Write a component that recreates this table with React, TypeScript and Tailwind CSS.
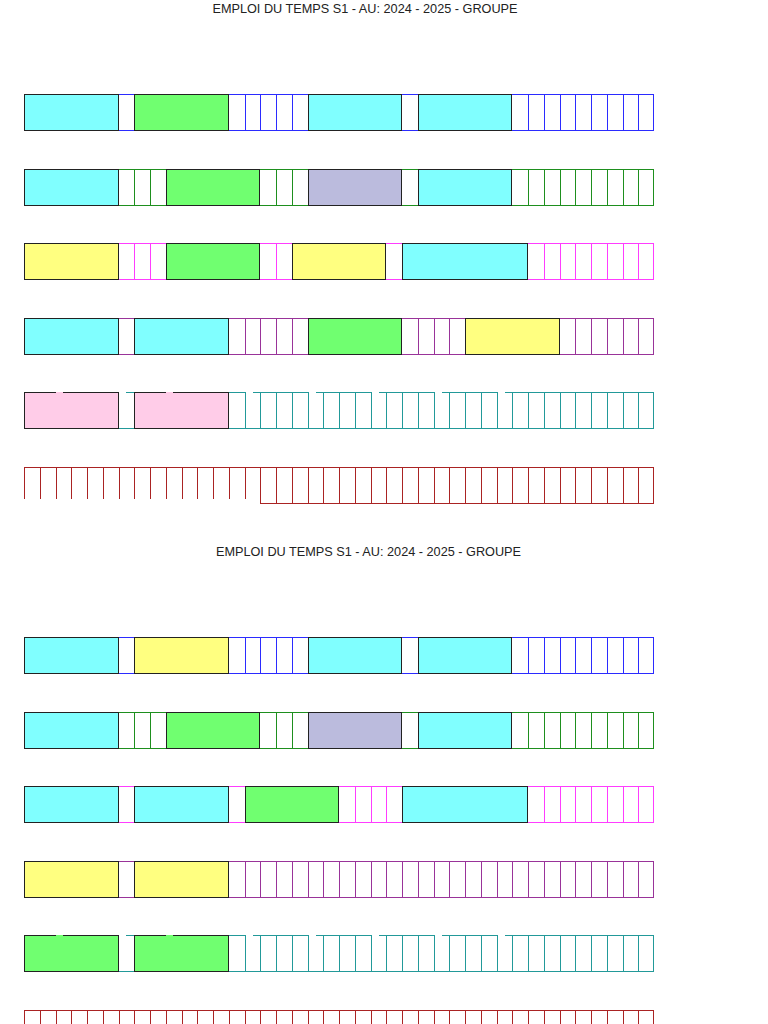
import React from "react";

type Kind = "e" | "s" | "b";
type Item = { kind: Kind; start: number; span: number; fill?: string };

const FILL: Record<string, string> = {
  C: "bg-[#80ffff]",
  G: "bg-[#70ff70]",
  Y: "bg-[#ffff80]",
  L: "bg-[#bbbbdd]",
  P: "bg-[#ffcce8]",
};

const LINE: Record<string, string> = {
  blue: "border-[#2b2bff]",
  green: "border-[#1e8f1e]",
  magenta: "border-[#ff3cff]",
  purple: "border-[#993399]",
  teal: "border-[#229999]",
  red: "border-[#aa2323]",
};

const GAPS = [2, 6, 10, 14, 18, 22, 26, 30];

const edge = (k: number) => Math.round(k * 15.75);
const width = (start: number, span: number) => edge(start + span) - edge(start);

function parse(spec: string): Item[] {
  const out: Item[] = [];
  let i = 0;
  for (const tok of spec.split(" ")) {
    const k = tok[0];
    const n = parseInt(tok.slice(1), 10);
    if (k === "e" || k === "s") {
      for (let j = 0; j < n; j++) out.push({ kind: k as Kind, start: i++, span: 1 });
    } else {
      out.push({ kind: "b", start: i, span: n, fill: FILL[k] });
      i += n;
    }
  }
  return out;
}

function Row({ spec, line, gaps }: { spec: string; line: string; gaps?: boolean }) {
  const items = parse(spec);
  const lc = LINE[line];
  return (
    <div className="flex items-start">
      {items.map((it, idx) => {
        const prev = items[idx - 1];
        const last = idx === items.length - 1;
        const prevBlock = prev && prev.kind === "b";
        const w = { width: width(it.start, it.span) };
        if (it.kind === "b") {
          const hasGap =
            gaps && GAPS.some((g) => g > it.start && g < it.start + it.span);
          if (hasGap) {
            return (
              <div
                key={idx}
                style={w}
                className={`h-[37px] shrink-0 border-x border-b border-[#222] ${it.fill}`}
              >
                <div className="flex">
                  <div className="w-[31px] border-t border-[#222]" />
                  <div className="w-[7px]" />
                  <div className="flex-1 border-t border-[#222]" />
                </div>
              </div>
            );
          }
          return (
            <div
              key={idx}
              style={w}
              className={`h-[37px] shrink-0 border border-[#222] ${it.fill}`}
            />
          );
        }
        if (it.kind === "s") {
          return (
            <div
              key={idx}
              style={w}
              className={`h-[32px] shrink-0 border-t border-l ${lc}`}
            />
          );
        }
        const isGap = gaps && GAPS.includes(it.start);
        const cls = [
          "h-[37px] shrink-0 border-b",
          isGap ? "" : "border-t",
          prevBlock ? "" : "border-l",
          last ? "border-r" : "",
          lc,
        ].join(" ");
        return (
          <div key={idx} style={w} className={cls}>
            {isGap ? <div className={`ml-[7px] border-t ${lc}`} /> : null}
          </div>
        );
      })}
    </div>
  );
}

type RowDef = { spec: string; line: string; gaps?: boolean };

const SECTIONS: RowDef[][] = [
  [
    { spec: "C6 e1 G6 e5 C6 e1 C6 e9", line: "blue" },
    { spec: "C6 e3 G6 e3 L6 e1 C6 e9", line: "green" },
    { spec: "Y6 e3 G6 e2 Y6 e1 C8 e8", line: "magenta" },
    { spec: "C6 e1 C6 e5 G6 e4 Y6 e6", line: "purple" },
    { spec: "P6 e1 P6 e27", line: "teal", gaps: true },
    { spec: "s15 e25", line: "red" },
  ],
  [
    { spec: "C6 e1 Y6 e5 C6 e1 C6 e9", line: "blue" },
    { spec: "C6 e3 G6 e3 L6 e1 C6 e9", line: "green" },
    { spec: "C6 e1 C6 e1 G6 e4 C8 e8", line: "magenta" },
    { spec: "Y6 e1 Y6 e27", line: "purple" },
    { spec: "G6 e1 G6 e27", line: "teal", gaps: true },
    { spec: "s15 e25", line: "red" },
  ],
];

export default function App() {
  return (
    <div className="w-[768px] min-h-screen bg-white font-['Liberation_Sans',Arial,sans-serif]">
      {SECTIONS.map((rows, si) => (
        <section key={si} className="h-[543px]">
          <div
            className={`pt-[2px] text-center text-[12.7px] leading-[15px] text-[#222] ${
              si === 0 ? "w-[730px]" : "w-[737px]"
            }`}
          >
            EMPLOI DU TEMPS S1 - AU: 2024 - 2025 - GROUPE
          </div>
          <div className="mt-[77px] ml-[24px] flex flex-col gap-[37.5px]">
            {rows.map((r, ri) => (
              <Row key={ri} spec={r.spec} line={r.line} gaps={r.gaps} />
            ))}
          </div>
        </section>
      ))}
    </div>
  );
}
